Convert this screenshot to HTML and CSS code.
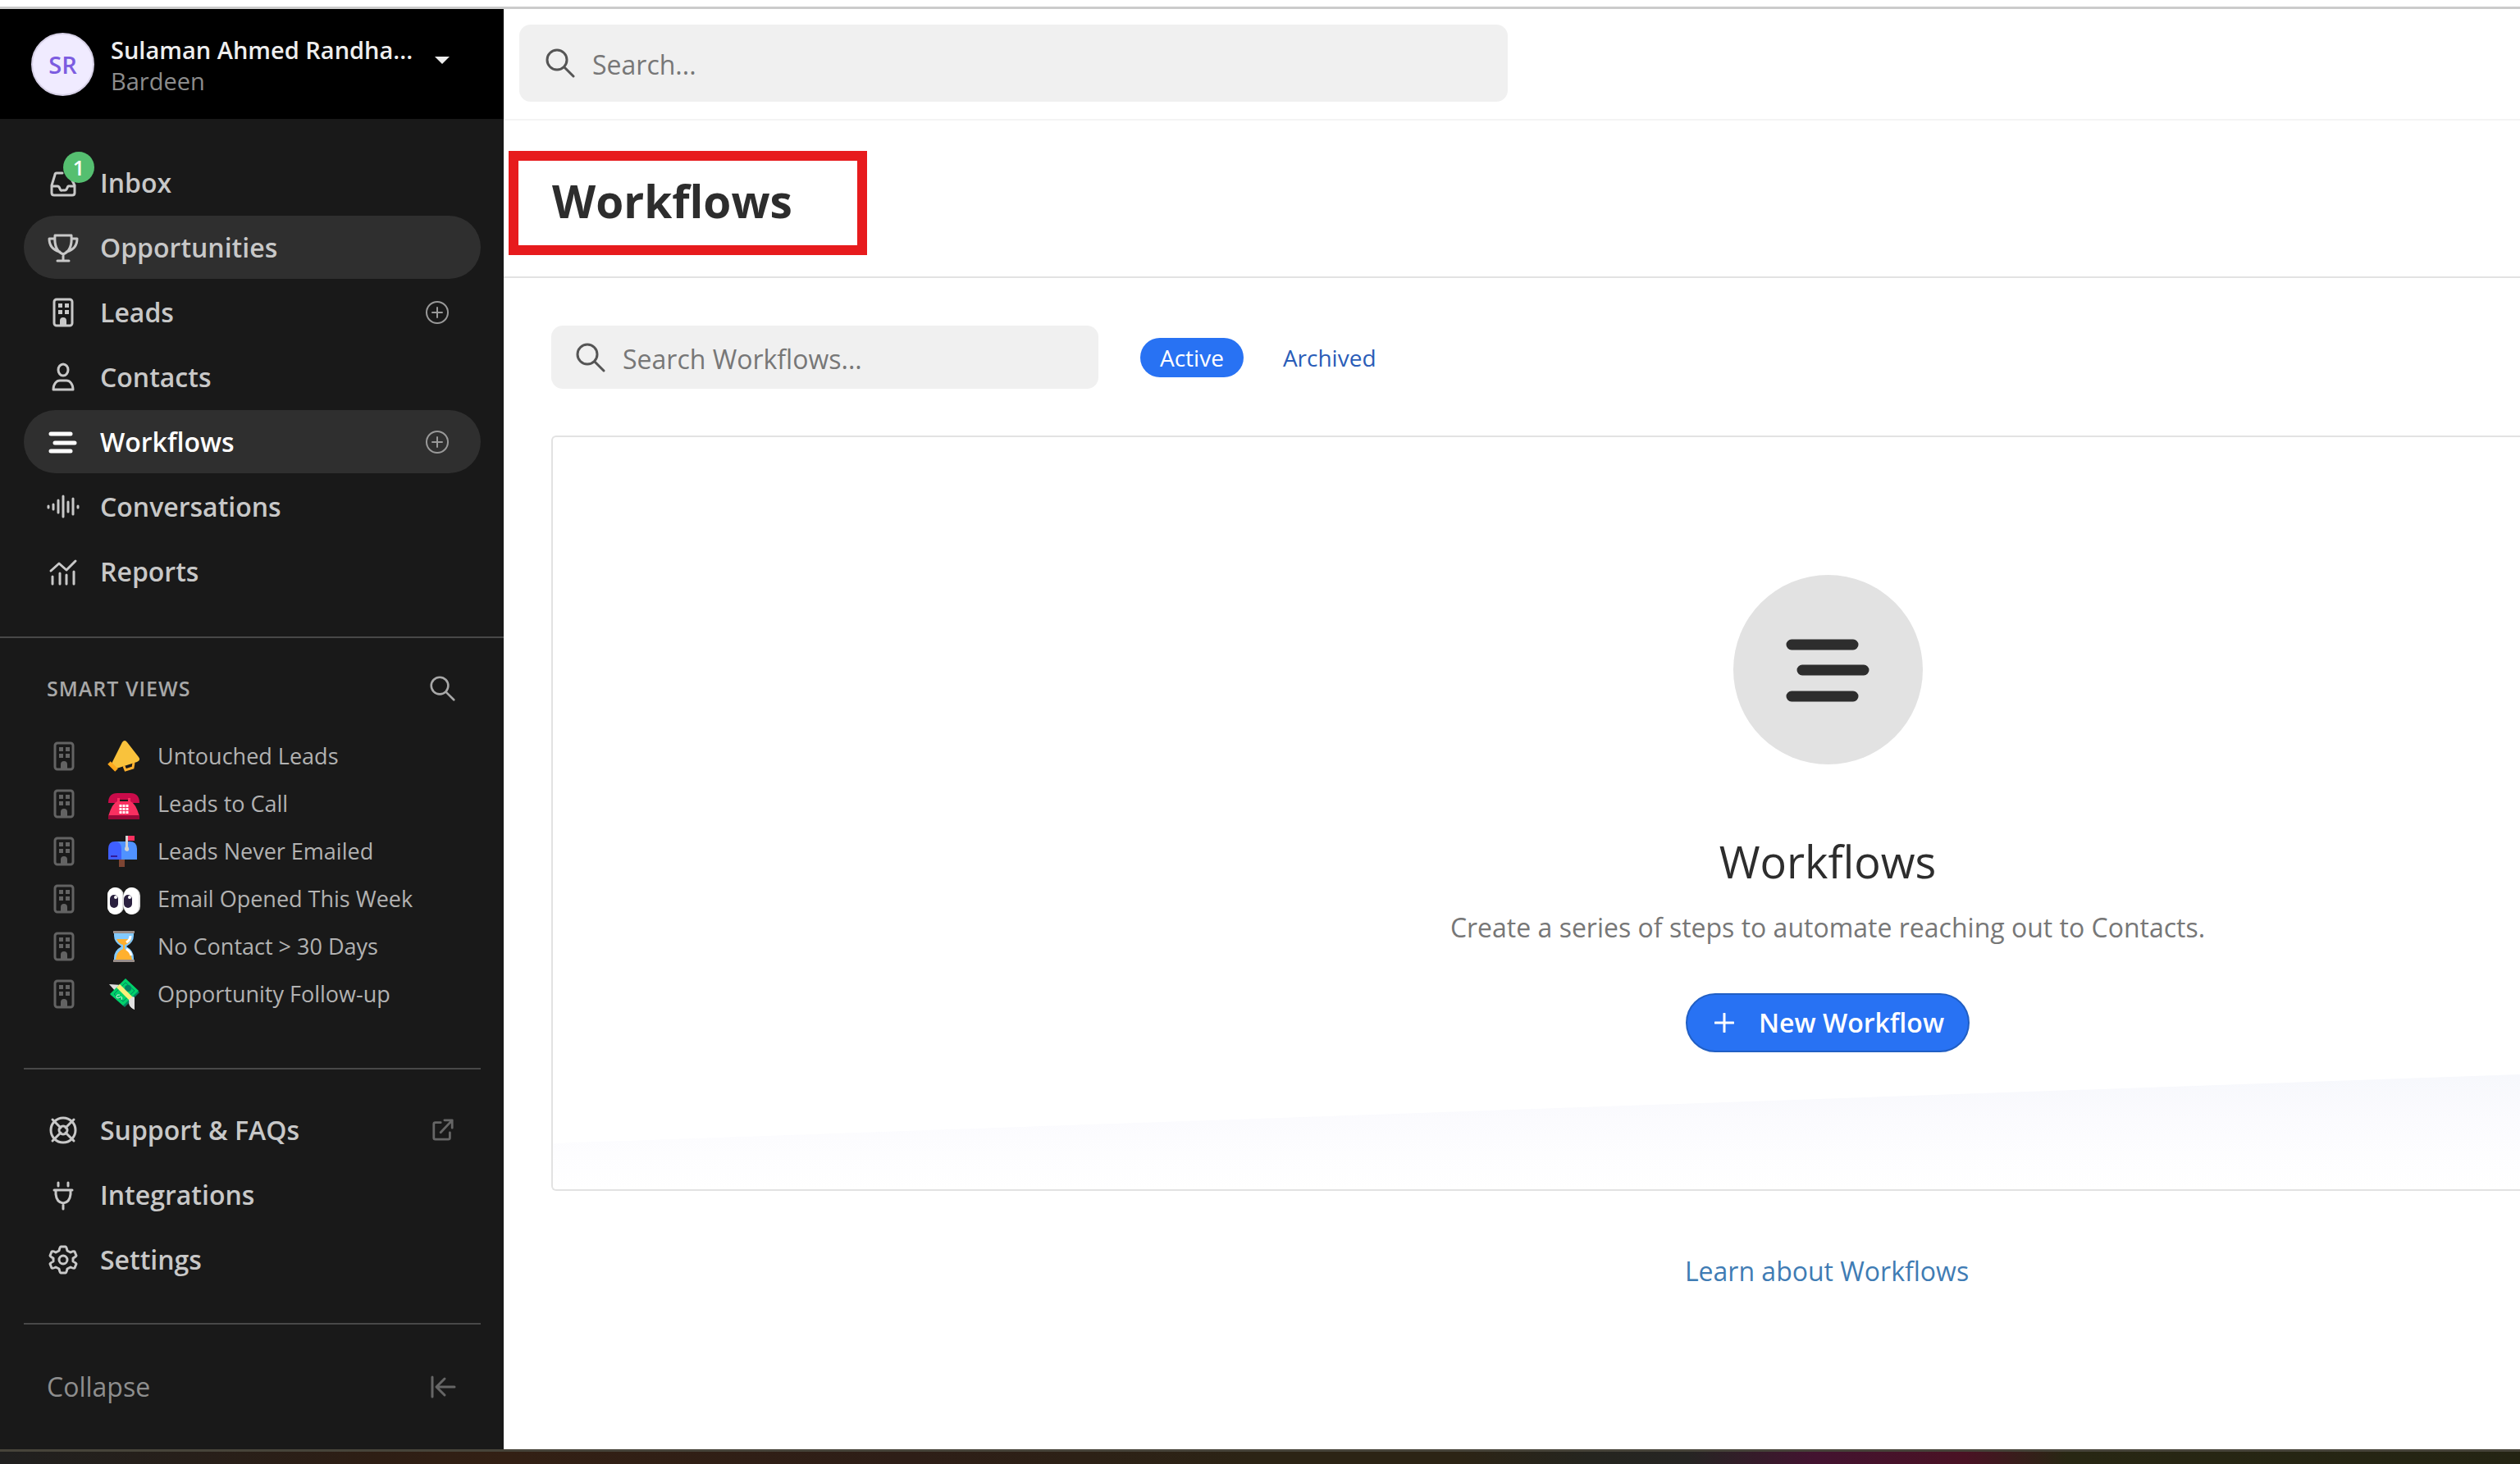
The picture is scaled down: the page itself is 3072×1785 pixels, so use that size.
FILE: index.html
```html
<!DOCTYPE html>
<html lang="en">
<head>
    <meta charset="UTF-8">
    <title>Workflows</title>
    <link rel="stylesheet" href="styles.css">
</head>
<body>
    <!-- shared icons -->
    <svg class="sprite" aria-hidden="true">
        <symbol id="i-inbox" viewBox="0 0 40 40"><path d="M19 8h-7q-2 0-2 2L6 23v9q0 3 3 3h22q3 0 3-3v-9l-4-8M6 24h7q2 0 3 3t3 2h3q2 0 3-3t3-2h6"/></symbol>
        <symbol id="i-trophy" viewBox="0 0 40 40"><path d="M10 5h20c1 12-2 20-10 23C12 25 9 17 10 5zM10 9H3c0 9 5 14 13 16M30 9h7c0 9-5 14-13 16M20 28v7M13 36h14"/></symbol>
        <symbol id="i-lead" viewBox="0 0 28 36"><rect x="3" y="2" width="22" height="32" rx="3"/><path class="solid" d="M8 7h5v5H8zM16 7h5v5h-5zM8 15h5v5H8zM16 15h5v5h-5zM10 34v-6q0-4 4-4t4 4v6z"/></symbol>
        <symbol id="i-contact" viewBox="0 0 40 40"><ellipse cx="20" cy="11" rx="6" ry="7"/><path d="M8 35c0-7 4-11 8-11h8c4 0 8 4 8 11z"/></symbol>
        <symbol id="i-flow" viewBox="0 0 40 40"><path d="M5 10h24M10 21h24M5 31h24"/></symbol>
        <symbol id="i-wave" viewBox="0 0 40 40"><path d="M2 19v2M8 17v6M14 12v15M20 7v25M26 14v12M32 10v19M38 19v2"/></symbol>
        <symbol id="i-chart" viewBox="0 0 40 40"><path d="M5 19l10-9 9 8L35 7M7 26v9M16 22v13M24 24v11M33 20v15"/></symbol>
        <symbol id="i-support" viewBox="0 0 40 40"><circle cx="20" cy="20" r="15"/><circle cx="20" cy="20" r="5"/><path d="M7 7l10 10M33 7L23 17M7 33l10-10M33 33L23 23"/></symbol>
        <symbol id="i-plug" viewBox="0 0 40 40"><path d="M14 5v4M26 5v4M9 14h22M11 14v5q1 10 9 11 8-1 9-11v-5M20 30v7"/></symbol>
        <symbol id="i-gear" viewBox="0 0 40 40"><path d="M17 4h6q1 0 2 5l4 2q4-2 5-1l2 5q0 1-4 3v4q4 2 4 3l-2 5q-1 1-5-1l-4 2q-1 5-2 5h-6q-1 0-2-5l-4-2q-4 2-5 1l-2-5q0-1 4-3v-4q-4-2-4-3l2-5q1-1 5 1l4-2q1-5 2-5z"/><circle cx="20" cy="20" r="5"/></symbol>
        <symbol id="i-search" viewBox="0 0 36 36"><circle cx="14" cy="14" r="12"/><path d="M23 23l11 11"/></symbol>
        <symbol id="i-add" viewBox="0 0 30 30"><circle cx="15" cy="15" r="13"/><path d="M15 9v12M9 15h12"/></symbol>
        <symbol id="i-external" viewBox="0 0 30 30"><path d="M12 5H5q-2 0-2 2v18q0 2 2 2h17q2 0 2-2v-7M17 2h10v10M27 2L12 18"/></symbol>
        <symbol id="i-collapse" viewBox="0 0 32 28"><path d="M3 2v24M30 14H9M18 4L8 14l10 10"/></symbol>
    </svg>

    <div class="browserEdge"></div>
    <div class="app">
        <aside class="sidebar">
            <button class="account" type="button">
                <span class="avatar">SR</span>
                <span class="who">
                    <span class="name">Sulaman Ahmed Randha...</span>
                    <span class="org">Bardeen</span>
                </span>
                <span class="caret"></span>
            </button>

            <ul class="nav">
                <li><a href="#"><span class="iconBox"><svg><use href="#i-inbox"/></svg><span class="badge">1</span></span>Inbox</a></li>
                <li class="on"><a href="#"><span class="iconBox"><svg><use href="#i-trophy"/></svg></span>Opportunities</a></li>
                <li><a href="#"><span class="iconBox"><svg class="building"><use href="#i-lead"/></svg></span>Leads</a><button type="button" aria-label="Add lead"><svg><use href="#i-add"/></svg></button></li>
                <li><a href="#"><span class="iconBox"><svg><use href="#i-contact"/></svg></span>Contacts</a></li>
                <li class="on current"><a href="#"><span class="iconBox"><svg><use href="#i-flow"/></svg></span>Workflows</a><button type="button" aria-label="Add workflow"><svg><use href="#i-add"/></svg></button></li>
                <li><a href="#"><span class="iconBox"><svg class="wave"><use href="#i-wave"/></svg></span>Conversations</a></li>
                <li><a href="#"><span class="iconBox"><svg><use href="#i-chart"/></svg></span>Reports</a></li>
            </ul>

            <section class="views">
                <div class="viewsHead">
                    <h2>SMART VIEWS</h2>
                    <button type="button" aria-label="Search smart views"><svg><use href="#i-search"/></svg></button>
                </div>
                <ul>
                    <li><a href="#"><svg class="building"><use href="#i-lead"/></svg>
                        <svg class="emoji" viewBox="0 0 40 40"><path d="M18 3q3-4 6 0l14 18q3 4-2 6L11 35 5 29z" fill="#f9c23c"/><path d="M2 28l9 9" stroke="#ffa81c" stroke-width="5"/><path d="M20 32l2 5 9-3 1-6" fill="none" stroke="#ffb02e" stroke-width="3"/></svg>
                        Untouched Leads</a></li>
                    <li><a href="#"><svg class="building"><use href="#i-lead"/></svg>
                        <svg class="emoji" viewBox="0 0 40 40"><path d="M1 19q0-12 11-12h16q11 0 11 12H28v-4H12v4z" fill="#ca0b4a"/><path d="M12 13h3v4h10v-4h3v4q6 2 11 18H1q5-16 11-18z" fill="#f92f60"/><path d="M1 34h38v5H1z" fill="#990838"/><path d="M16 21v11M20 21v11M24 21v11" stroke="#fff" stroke-width="3" stroke-dasharray="3 1"/></svg>
                        Leads to Call</a></li>
                    <li><a href="#"><svg class="building"><use href="#i-lead"/></svg>
                        <svg class="emoji" viewBox="0 0 40 40"><path d="M14 29h7v10h-7z" fill="#7d4533"/><path d="M9 8h18q9 0 9 9v13H9z" fill="#5092ff"/><path d="M1 17q0-9 8-9t8 9v13H1z" fill="#3f5fff"/><path d="M4 26h8" stroke="#321b9b" stroke-width="2"/><path d="M24 1h9v6h-9z" fill="#f8315f"/><path d="M22 1h3v13q3 5-1 6-5-1-2-6z" fill="#d3d3d3"/></svg>
                        Leads Never Emailed</a></li>
                    <li><a href="#"><svg class="building"><use href="#i-lead"/></svg>
                        <svg class="emoji" viewBox="0 0 40 40"><rect x="20" y="6" width="20" height="33" rx="10" fill="#ddd"/><rect x="20" y="6" width="18" height="33" rx="9" fill="#fff"/><rect x="0" y="6" width="20" height="33" rx="10" fill="#ddd"/><rect x="0" y="6" width="18" height="33" rx="9" fill="#fff"/><rect x="3" y="15" width="10" height="16" rx="5" fill="#2a203f"/><rect x="20" y="15" width="10" height="16" rx="5" fill="#2a203f"/><circle cx="10" cy="18" r="2" fill="#fff"/><circle cx="27" cy="18" r="2" fill="#fff"/></svg>
                        Email Opened This Week</a></li>
                    <li><a href="#"><svg class="building"><use href="#i-lead"/></svg>
                        <svg class="emoji" viewBox="0 0 40 40"><path d="M8 2h24v5q0 8-9 13 9 5 9 14v3H8v-3q0-9 9-14-9-5-9-13z" fill="#83cbff"/><path d="M11 11h18q-3 6-8 7v5q8 3 9 13H10q1-10 9-13v-5q-5-1-8-7z" fill="#ffb02e"/><path d="M28 7q0 5-5 8M23 23q5 3 6 8" fill="none" stroke="#fff" stroke-width="3"/><path d="M7 1h26v3H7zM7 36h26v3H7z" fill="#998e8a"/></svg>
                        No Contact &gt; 30 Days</a></li>
                    <li><a href="#"><svg class="building"><use href="#i-lead"/></svg>
                        <svg class="emoji" viewBox="0 0 40 40"><path d="M2 8l15 1-7 8zM26 30l7-6v15q-7-3-7-9z" fill="#ddd"/><path d="M4 21L23 3l16 15-18 18z" fill="#008463"/><path d="M3 20L22 1l16 15-19 18z" fill="#00d26a"/><path d="M8 20L22 6l11 10-14 13z" fill="none" stroke="#008463" stroke-width="1"/><circle cx="25" cy="13" r="4" fill="#008463"/><path d="M11 12l4-4 16 16-4 4z" fill="#fcef7b"/><path d="M15 21q-4-1-4 2t4 1 2 3" fill="none" stroke="#d3f5dd" stroke-width="1"/><path d="M26 27l5-4 2 1v15q-7-3-7-12z" fill="#e1e1e1"/></svg>
                        Opportunity Follow-up</a></li>
                </ul>
            </section>

            <ul class="nav more">
                <li><a href="#"><span class="iconBox"><svg><use href="#i-support"/></svg></span>Support &amp; FAQs<svg class="tail"><use href="#i-external"/></svg></a></li>
                <li><a href="#"><span class="iconBox"><svg><use href="#i-plug"/></svg></span>Integrations</a></li>
                <li><a href="#"><span class="iconBox"><svg><use href="#i-gear"/></svg></span>Settings</a></li>
            </ul>

            <button class="collapse" type="button">Collapse<svg><use href="#i-collapse"/></svg></button>
        </aside>

        <main class="main">
            <header class="topbar">
                <label class="field">
                    <svg><use href="#i-search"/></svg>
                    <input type="text" placeholder="Search..." aria-label="Search">
                </label>
            </header>

            <div class="titleBar">
                <h1>Workflows</h1>
            </div>

            <div class="content">
                <div class="filters">
                    <label class="field">
                        <svg><use href="#i-search"/></svg>
                        <input type="text" placeholder="Search Workflows..." aria-label="Search workflows">
                    </label>
                    <button class="tab active" type="button">Active</button>
                    <button class="tab" type="button">Archived</button>
                </div>

                <section class="empty">
                    <div class="circle"><svg viewBox="0 0 102 78"><path d="M7 8h75M20 39h75M7 71h75"/></svg></div>
                    <h2>Workflows</h2>
                    <p>Create a series of steps to automate reaching out to Contacts.</p>
                    <button class="create" type="button"><svg viewBox="0 0 24 24"><path d="M12 1v22M1 12h22"/></svg>New Workflow</button>
                </section>

                <div class="learn"><a href="#">Learn about Workflows</a></div>
            </div>
        </main>
    </div>
    <div class="desktop"></div>
</body>
</html>
```
FILE: styles.css
```css
/* reset */
html,body{height: 100%;overflow: hidden;}
body,h1,h2,p,ul{margin: 0;padding: 0;}
body{
    display: flex;
    flex-direction: column;
    background: #fff;
    color: #2d2d2d;
    font: 32px/40px "Segoe UI","Open Sans","Noto Sans",sans-serif;
}
*{box-sizing: border-box;}
a{color: inherit;text-decoration: none;}
ul{list-style: none;}
button,input{margin: 0;padding: 0;border: 0;background: none;color: inherit;font: inherit;}
svg{display: block;flex: none;fill: none;stroke: currentColor;stroke-width: 3;stroke-linecap: round;stroke-linejoin: round;}
.sprite{position: absolute;width: 0;height: 0;}
.solid{fill: currentColor;stroke: none;}

.browserEdge{
    flex: none;
    height: 11px;
    border-bottom: 3px solid #cbcbcb;
}
.desktop{
    flex: none;
    height: 18px;
    border-top: 3px solid #47443a;
    background: linear-gradient(90deg,#20201f 0%,#2e1e14 15%,#332014 20%,#2e1e17 36%,#2c2415 50%,#2c2415 58%,#25251f 63%,#262523 67%,#431330 72%,#4a1224 78%,#282713 82%,#242413 100%);
}

.app{
    display: flex;
    flex: 1;
    min-height: 0;
}

/* sidebar */
.sidebar{
    display: flex;
    flex-direction: column;
    flex: none;
    width: 614px;
    background: #191919;
    color: #c8c8c8;
}
.sidebar > *{flex: none;}
.account{
    display: flex;
    align-items: center;
    height: 134px;
    padding: 0 66px 0 38px;
    background: #000;
    text-align: left;
}
.avatar{
    width: 77px;
    height: 77px;
    border: 2px solid #d6d0e6;
    border-radius: 50%;
    background: #f0ebff;
    color: #7c5ce0;
    font-size: 29px;
    font-weight: 600;
    line-height: 73px;
    text-align: center;
}
.who{flex: 1;margin-left: 20px;padding-top: 4px;}
.name,.org{display: block;line-height: 38px;white-space: nowrap;}
.name{color: #eee;font-size: 29px;font-weight: 600;}
.org{color: #8c8c8c;font-size: 29px;}
.caret{
    margin-bottom: 10px;
    border: 9px solid transparent;
    border-top-color: #eee;
    border-bottom: 0;
}

.nav{
    display: flex;
    flex-direction: column;
    gap: 2px;
    padding: 39px 28px 41px 29px;
    border-bottom: 2px solid #484848;
    font-weight: 600;
}
.nav li{
    display: flex;
    align-items: center;
    height: 77px;
    padding: 0 38px 0 28px;
    border-radius: 39px;
}
.nav .on{background: #2f2f2f;}
.nav .current{color: #fff;}
.nav a{display: flex;align-items: center;flex: 1;}
.nav button{color: #999;}
.nav button svg{width: 30px;height: 30px;stroke-width: 2;}
.iconBox{
    display: flex;
    justify-content: center;
    position: relative;
    width: 40px;
    margin-right: 25px;
}
.iconBox svg{width: 40px;height: 40px;}
.building,.iconBox .building{width: 28px;height: 36px;}
.current .iconBox svg{stroke-width: 5;}
.iconBox .wave{stroke-width: 3;}
.badge{
    position: absolute;
    left: 20px;
    top: -18px;
    width: 38px;
    height: 38px;
    border-radius: 50%;
    background: #55bf70;
    color: #fff;
    font-size: 25px;
    line-height: 38px;
    text-align: center;
}

.views{padding: 38px 28px 61px 29px;}
.viewsHead{
    display: flex;
    align-items: center;
    justify-content: space-between;
    height: 46px;
    margin-bottom: 31px;
    padding: 0 31px 0 28px;
    color: #a8a8a8;
}
.viewsHead h2{font-size: 25px;font-weight: 600;letter-spacing: 1px;}
.viewsHead svg{width: 31px;height: 31px;}
.views li a{
    display: flex;
    align-items: center;
    height: 58px;
    padding-left: 35px;
    color: #b2b2b2;
    font-size: 27px;
}
.views .building{color: #636363;}
.emoji{width: 40px;height: 40px;margin: 0 21px 0 39px;stroke: none;stroke-linecap: butt;stroke-linejoin: miter;}

.more{margin: 0 28px 0 29px;padding: 35px 0 39px;border-top: 2px solid #484848;}
.tail{width: 28px;height: 28px;margin-left: auto;color: #666;}
.more li{padding-right: 32px;}
.collapse{
    display: flex;
    align-items: center;
    justify-content: space-between;
    height: 152px;
    padding: 0 58px 0 57px;
    color: #8e8e8e;
}
.collapse svg{width: 32px;height: 28px;color: #666;}

/* main column */
.main{flex: 1;min-width: 0;background: #fff;}
.topbar{
    height: 136px;
    padding: 19px 19px 0;
    border-bottom: 2px solid #f4f4f4;
}
.field{
    display: flex;
    align-items: center;
    border-radius: 14px;
    background: #f0f0f0;
    color: #555;
}
.field svg{width: 36px;height: 36px;}
.field input{flex: 1;min-width: 0;margin-left: 21px;padding-top: 4px;outline: 0;}
.field input::placeholder{color: #777;opacity: 1;}
.topbar .field{max-width: 1205px;height: 94px;padding-left: 32px;}

.titleBar{
    height: 192px;
    padding: 37px 6px 0;
    border-bottom: 2px solid #e2e2e2;
}
.titleBar h1{
    width: 437px;
    height: 127px;
    padding-left: 41px;
    border: 12px solid #e71b1d;
    font-size: 55px;
    font-weight: 700;
    line-height: 97px;
}

.content{padding: 58px 0 0 58px;}
.filters{display: flex;align-items: center;}
.filters .field{width: 667px;height: 77px;margin-right: 51px;padding-left: 30px;}
.tab{
    height: 48px;
    margin-right: 24px;
    padding: 0 24px;
    border-radius: 24px;
    color: #2a5db8;
    font-size: 28px;
}
.tab.active{background: #2872f3;color: #fff;}

/* panel stays open on the right, its content sits right of the middle */
.empty,.learn{
    display: flex;
    flex-direction: column;
    align-items: center;
    padding-left: 710px;
}
.empty{
    position: relative;
    height: 921px;
    margin-top: 57px;
    padding-top: 168px;
    border: 2px solid #e2e2e2;
    border-right: 0;
    border-radius: 6px 0 0 6px;
    background: linear-gradient(#f4f6fb,#fbfbfe 50%,#fff) 0 100%/100% 170px no-repeat;
}
/* white slope over the tinted base */
.empty:before{
    content: "";
    position: absolute;
    left: 0;
    right: 0;
    bottom: 0;
    height: 172px;
    background: #fff;
    clip-path: polygon(0 0,100% 0,100% 32px,0 116px);
}
.empty > *{position: relative;}
.circle{
    display: flex;
    align-items: center;
    justify-content: center;
    width: 231px;
    height: 231px;
    border-radius: 50%;
    background: #e2e2e2;
}
.circle svg{width: 102px;height: 78px;stroke-width: 13;}
.empty h2{margin-top: 78px;font-size: 54px;font-weight: 400;line-height: 80px;}
.empty p{margin-top: 21px;color: #777;}
.create{
    display: flex;
    align-items: center;
    height: 72px;
    margin-top: 60px;
    padding: 0 29px 0 33px;
    border: 2px solid #215fc4;
    border-radius: 36px;
    background: #2872f3;
    color: #fff;
    font-weight: 600;
}
.create svg{width: 24px;height: 24px;margin-right: 30px;}
.learn{margin-top: 78px;color: #3f7cb4;}
```
